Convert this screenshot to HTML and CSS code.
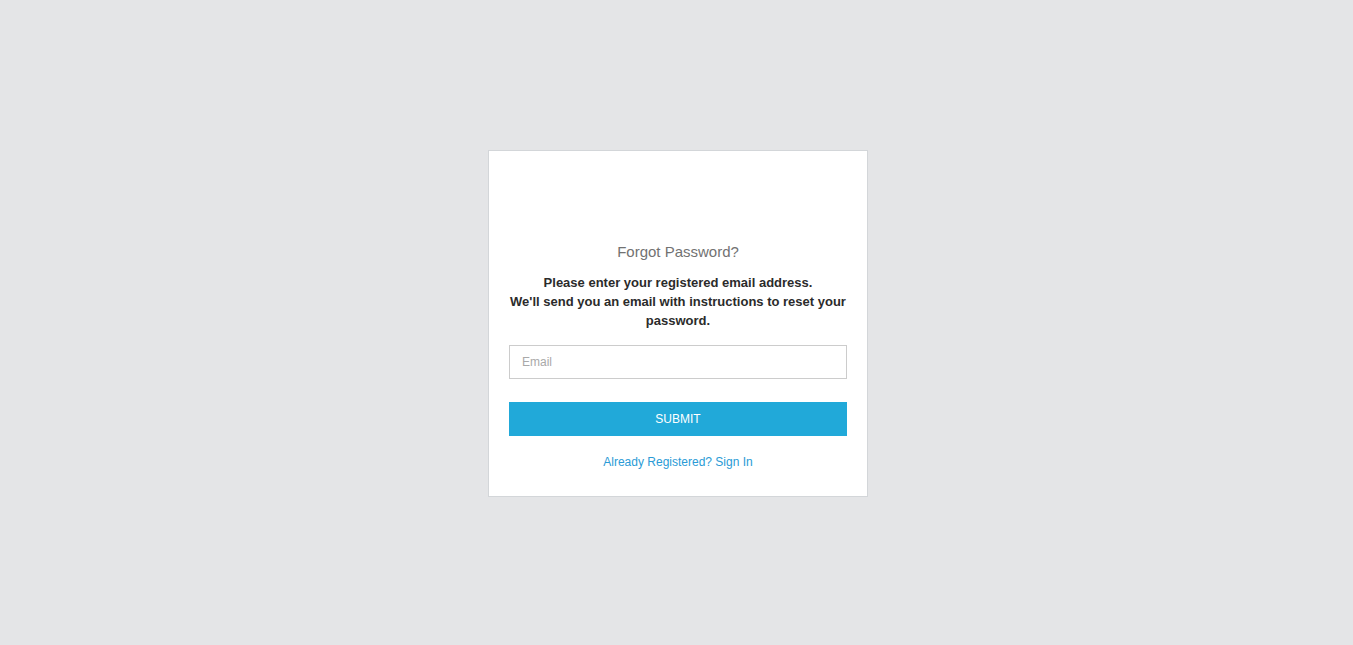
FILE: index.html
```html
<!DOCTYPE html>
<html>
<head>
<meta charset="utf-8">
<title>Forgot Password</title>
<link rel="stylesheet" href="styles.css">
</head>
<body>
<div class="page">
  <div class="card">
    <div class="logo"></div>
    <h2 class="title">Forgot Password?</h2>
    <p class="desc">Please enter your registered email address.<br>We'll send you an email with instructions to reset your password.</p>
    <form class="form">
      <input class="input" type="email" placeholder="Email">
      <button class="submit" type="button">SUBMIT</button>
    </form>
    <a class="link" href="#">Already Registered? Sign In</a>
  </div>
</div>
</body>
</html>
```

FILE: styles.css
```css
* { box-sizing: border-box; }
html, body { margin: 0; padding: 0; }
body {
  background: #e4e5e7;
  font-family: "Liberation Sans", Arial, sans-serif;
}
.page {
  min-height: 100vh;
  display: flex;
  align-items: center;
  justify-content: center;
  padding-left: 3px;
  padding-top: 2px;
}
.card {
  width: 380px;
  background: #fff;
  border: 1px solid #d3d6d9;
  padding: 0 20px 25px;
  display: flex;
  flex-direction: column;
  align-items: stretch;
  text-align: center;
}
.logo { height: 91px; }
.title {
  margin: 0;
  font-size: 15px;
  line-height: 20px;
  font-weight: normal;
  color: #727272;
}
.desc {
  margin: 11px 0 0;
  font-size: 13px;
  line-height: 19px;
  font-weight: bold;
  color: #2b2b2b;
}
.form {
  display: flex;
  flex-direction: column;
  margin-top: 15px;
}
.input {
  height: 34px;
  border: 1px solid #cccccc;
  padding: 0 12px;
  font-family: inherit;
  font-size: 12px;
  color: #333;
  outline: none;
}
.input::placeholder { color: #a9a9a9; }
.submit {
  margin-top: 23px;
  height: 34px;
  border: 0;
  background: #21a9d9;
  color: #fff;
  font-family: inherit;
  font-size: 12px;
  cursor: pointer;
}
.link {
  margin-top: 18px;
  font-size: 12px;
  line-height: 17px;
  color: #2a9bd6;
  text-decoration: none;
}
```
